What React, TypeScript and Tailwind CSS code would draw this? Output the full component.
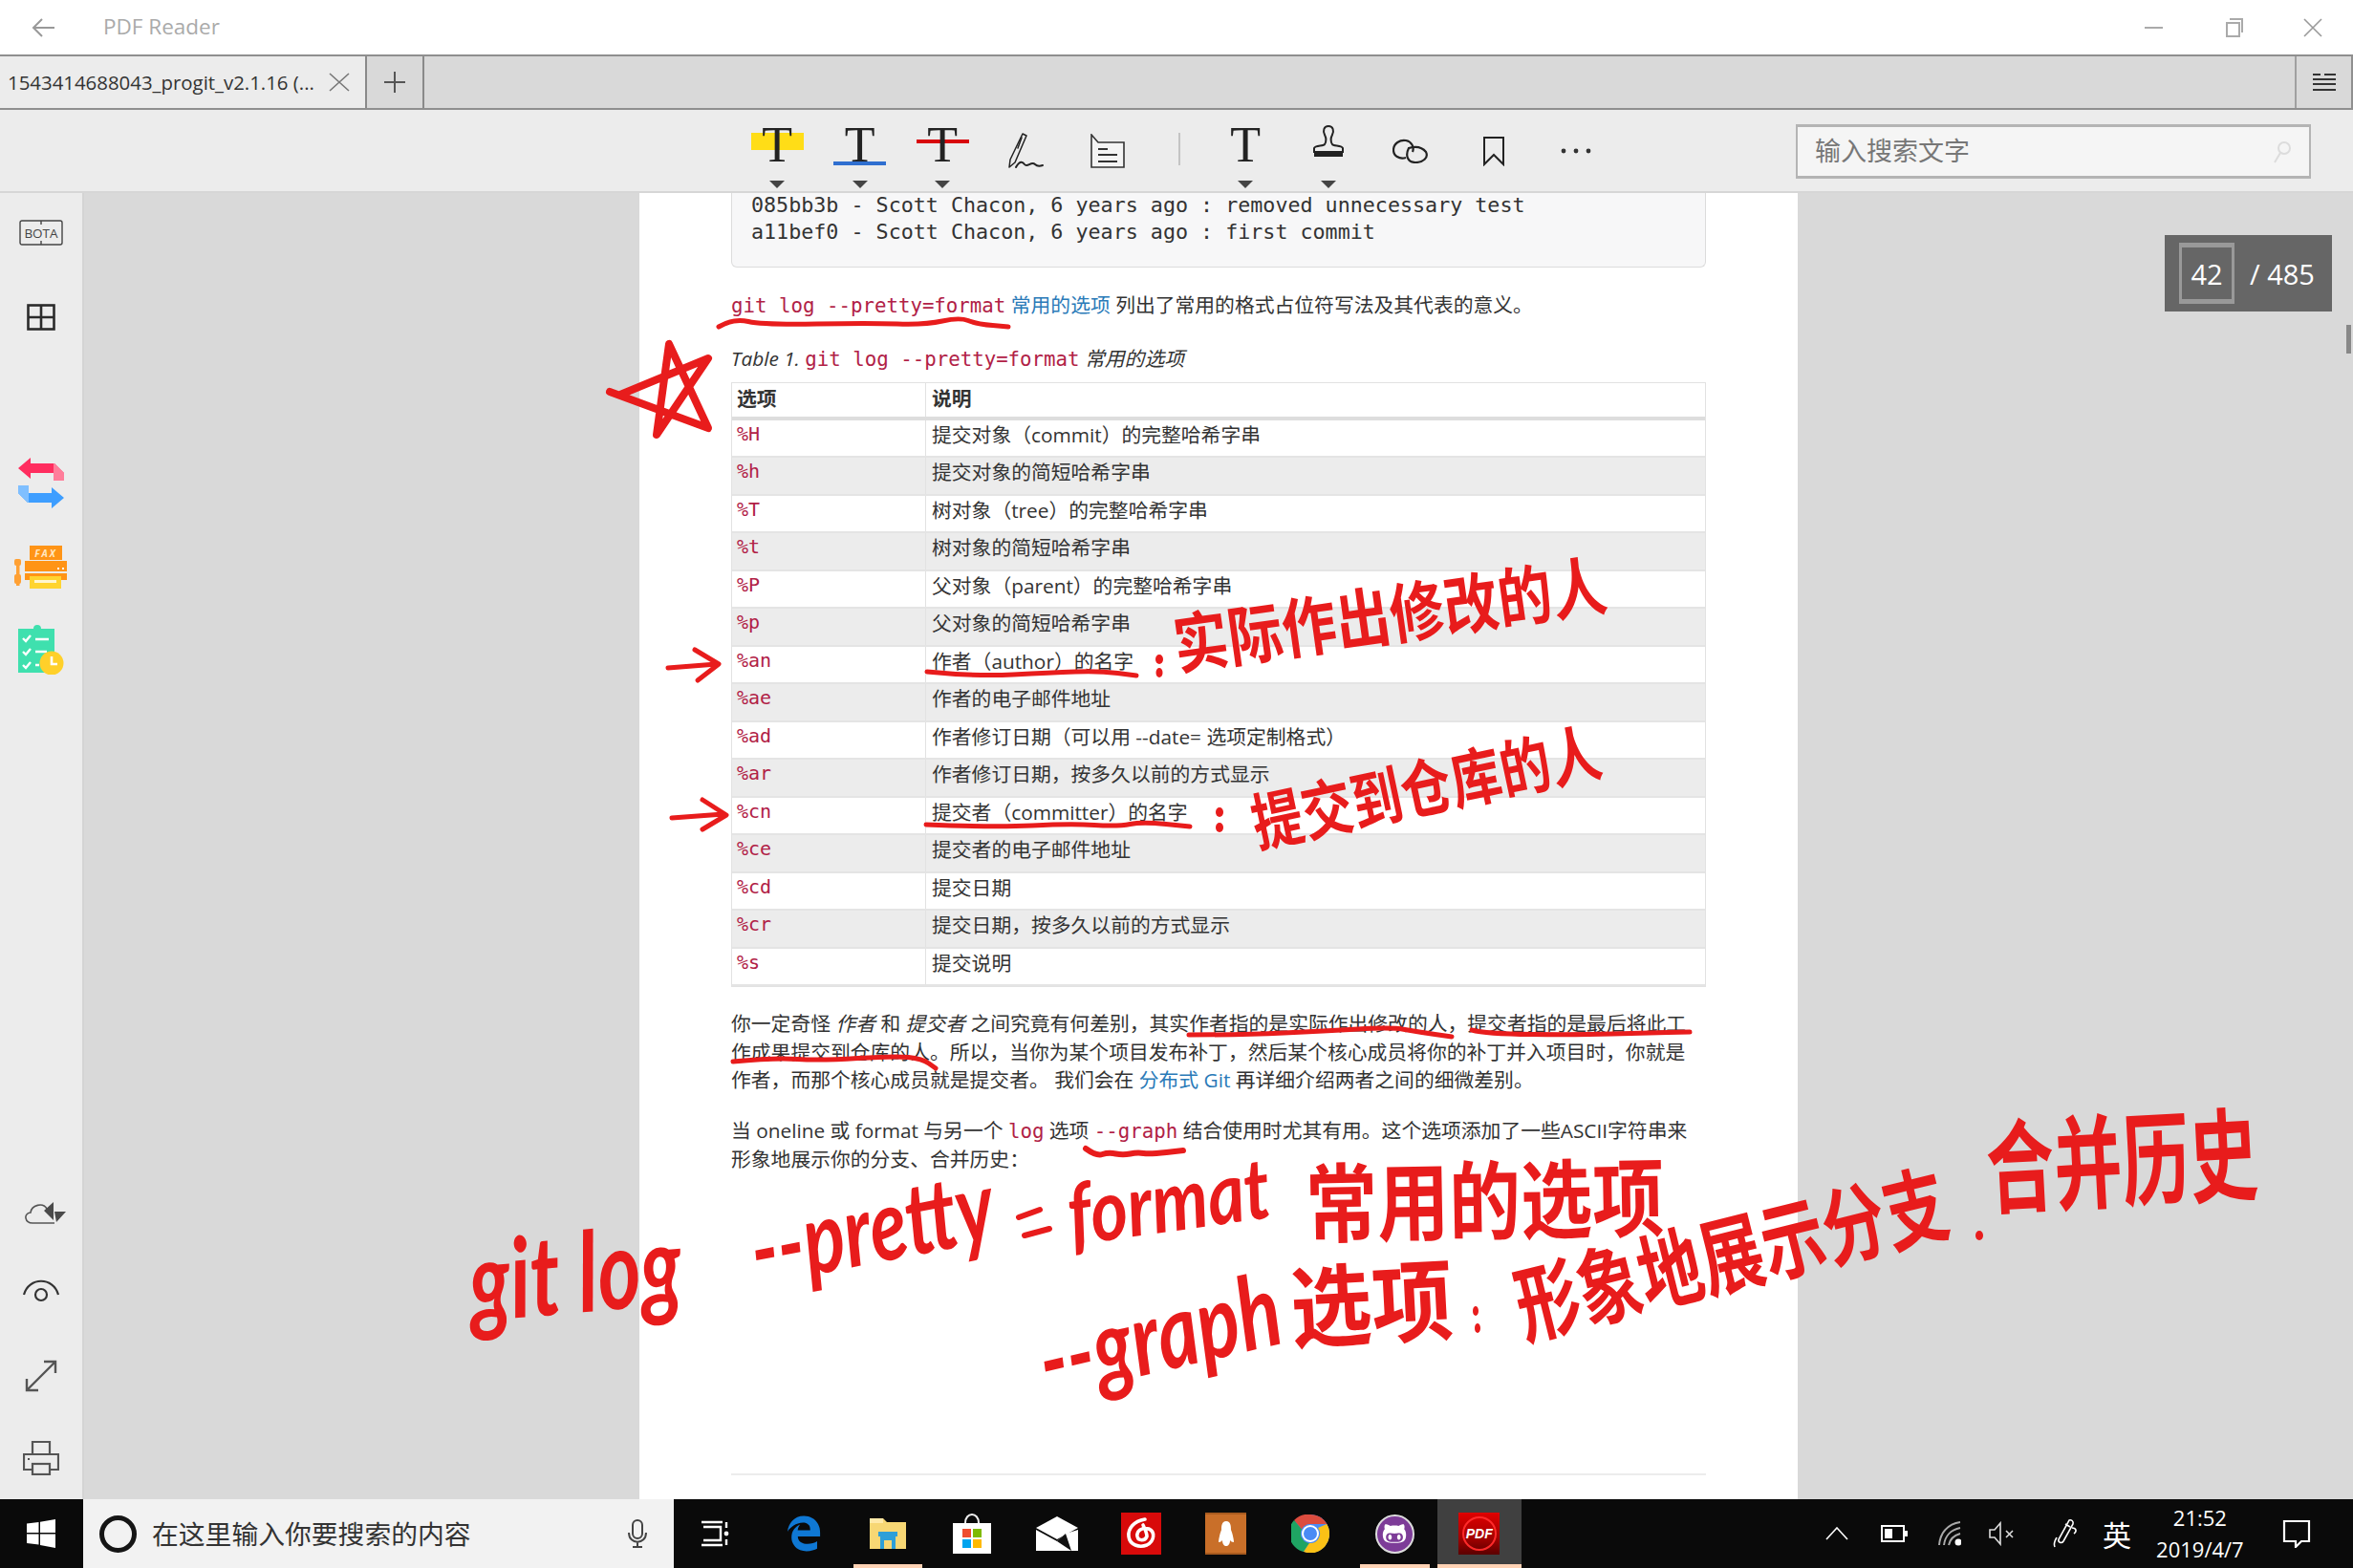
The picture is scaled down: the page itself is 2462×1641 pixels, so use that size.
import React from "react";
import { FaEdgeLegacy, FaGithubAlt } from "react-icons/fa6";

const rows: [string, string][] = [
  ["%H", "提交对象（commit）的完整哈希字串"],
  ["%h", "提交对象的简短哈希字串"],
  ["%T", "树对象（tree）的完整哈希字串"],
  ["%t", "树对象的简短哈希字串"],
  ["%P", "父对象（parent）的完整哈希字串"],
  ["%p", "父对象的简短哈希字串"],
  ["%an", "作者（author）的名字"],
  ["%ae", "作者的电子邮件地址"],
  ["%ad", "作者修订日期（可以用 --date= 选项定制格式）"],
  ["%ar", "作者修订日期，按多久以前的方式显示"],
  ["%cn", "提交者（committer）的名字"],
  ["%ce", "提交者的电子邮件地址"],
  ["%cd", "提交日期"],
  ["%cr", "提交日期，按多久以前的方式显示"],
  ["%s", "提交说明"],
];

function smooth(p: number[][]): string {
  let d = `M${p[0][0]} ${p[0][1]}`;
  for (let i = 1; i < p.length - 1; i++) {
    const mx = (p[i][0] + p[i + 1][0]) / 2;
    const my = (p[i][1] + p[i + 1][1]) / 2;
    d += ` Q${p[i][0]} ${p[i][1]} ${mx} ${my}`;
  }
  const l = p[p.length - 1];
  return d + ` L${l[0]} ${l[1]}`;
}

const strokes: { w: number; p: number[][] }[] = [
  { w: 5, p: [[752, 342], [767, 333], [799, 340], [910, 338], [968, 340], [1004, 332], [1022, 339], [1055, 342]] },
  { w: 5, p: [[970, 703], [1020, 708], [1100, 704], [1150, 702], [1189, 707]] },
  { w: 5, p: [[969, 863], [1040, 866], [1120, 862], [1170, 865], [1195, 860], [1245, 865]] },
  { w: 5, p: [[1244, 1083], [1301, 1083], [1386, 1079], [1456, 1075], [1484, 1080], [1519, 1085]] },
  { w: 5, p: [[1540, 1078], [1554, 1082], [1652, 1083], [1722, 1081], [1768, 1080]] },
  { w: 5, p: [[767, 1111], [810, 1107], [859, 1110], [936, 1105], [965, 1108], [979, 1118]] },
  { w: 6, p: [[1136, 1202], [1147, 1210], [1160, 1206], [1175, 1209], [1190, 1206], [1203, 1208], [1238, 1204]] },
];

function Ink() {
  return (
    <svg className="absolute inset-0 pointer-events-none" width="2462" height="1641" viewBox="0 0 2462 1641" fill="none" stroke="#e81c1c" strokeLinecap="round" strokeLinejoin="round">
      {strokes.map((s, i) => (
        <path key={i} d={smooth(s.p)} strokeWidth={s.w} />
      ))}
      <path d="M638 410 L741 448 L700 360 L687 455 L741 375 L649 413" strokeWidth="8" />
      <path d="M699 699 L750 695 M727 680 L752 695 L730 712" strokeWidth="5" />
      <path d="M703 856 L757 852 M735 837 L760 853 L735 868" strokeWidth="5" />
      <g fill="#e81c1c" stroke="none">
        <ellipse cx="1213" cy="690" rx="4" ry="5" />
        <ellipse cx="1213" cy="704" rx="3.5" ry="5" />
        <ellipse cx="1276" cy="850" rx="4" ry="5" />
        <ellipse cx="1276" cy="866" rx="4" ry="5" />
        <ellipse cx="1544" cy="1372" rx="3" ry="5" />
        <ellipse cx="1546" cy="1390" rx="3" ry="5" />
        <ellipse cx="2071" cy="1293" rx="4" ry="5" />
      </g>
      <path d="M1066 1274 L1088 1266 M1072 1293 L1098 1286" strokeWidth="6" />
    </svg>
  );
}

const cjkInk = "absolute leading-none whitespace-nowrap origin-left text-[#e81c1c] font-bold font-['Noto_Sans_CJK_SC',sans-serif]";
const latInk = "absolute leading-none whitespace-nowrap origin-left text-[#e81c1c] italic font-bold font-['Lato',sans-serif]";

function Handwriting() {
  return (
    <div className="absolute inset-0 pointer-events-none">
      <span className={`${cjkInk} left-[1228px] top-[643px] text-[57px] -rotate-[8deg] scale-y-[1.2]`}>实际作出修改的人</span>
      <span className={`${cjkInk} left-[1310px] top-[833px] text-[53px] -rotate-[12deg] scale-y-[1.25]`}>提交到仓库的人</span>
      <span className={`${latInk} left-[490px] top-[1296px] text-[86px] -rotate-[5deg] scale-y-[1.35]`}>git log</span>
      <span className={`${latInk} left-[785px] top-[1266px] text-[80px] -rotate-[11deg] scale-y-[1.3]`}>--pretty</span>
      <span className={`${latInk} left-[1117px] top-[1233px] text-[74px] -rotate-[8deg] scale-y-[1.2]`}>format</span>
      <span className={`${cjkInk} left-[1366px] top-[1217px] text-[75px] -rotate-[1deg] scale-y-[1.2]`}>常用的选项</span>
      <span className={`${latInk} left-[1087px] top-[1381px] text-[82px] -rotate-[13deg] scale-y-[1.3]`}>--graph</span>
      <span className={`${cjkInk} left-[1350px] top-[1320px] text-[85px] -rotate-[3deg] scale-y-[1.1]`}>选项</span>
      <span className={`${cjkInk} left-[1586px] top-[1330px] text-[66px] -rotate-[14deg] scale-y-[1.35]`}>形象地展示分支</span>
      <span className={`${cjkInk} left-[2078px] top-[1181px] text-[71px] -rotate-[3deg] scale-y-[1.5]`}>合并历史</span>
    </div>
  );
}

function Caret() {
  return (
    <svg width="16" height="8" viewBox="0 0 16 8" className="mt-[3px]">
      <polygon points="0,0 16,0 8,8" fill="#444" />
    </svg>
  );
}

function Tool({ children, caret }: { children: React.ReactNode; caret?: boolean }) {
  return (
    <div className="w-[86.5px] h-full flex flex-col items-center">
      <div className="h-[71px] flex items-center justify-center">{children}</div>
      {caret && <Caret />}
    </div>
  );
}

function TIcon({ bar }: { bar?: React.ReactNode }) {
  return (
    <div className="relative w-[55px] h-[71px] flex items-center justify-center">
      {bar}
      <span className="relative text-[52px] leading-none text-[#222] font-['Liberation_Serif',serif] mt-[2px]">T</span>
    </div>
  );
}

function Toolbar() {
  return (
    <div className="h-[87px] shrink-0 bg-[#ececec] border-b-2 border-[#d6d6d6] flex pl-[770px] relative">
      <Tool caret><TIcon bar={<div className="absolute left-0 right-0 top-[24px] h-[18px] bg-[#ffdd17]" />} /></Tool>
      <Tool caret><TIcon bar={<div className="absolute left-0 right-0 top-[54px] h-[4px] bg-[#2f6fd0]" />} /></Tool>
      <Tool caret><TIcon bar={<div className="absolute left-0 right-0 top-[31px] h-[4px] bg-[#d8060c]" />} /></Tool>
      <Tool>
        <svg width="38" height="38" viewBox="0 0 38 38" fill="none" stroke="#222" strokeWidth="1.5" strokeLinejoin="round" strokeLinecap="round" className="mt-[15px]">
          <path d="M16 1 L20 3 L8 31 L2 36 L3 28 Z" />
          <path d="M15 5 L11 16" />
          <path d="M9 36 C13 29 16 30 18 33 C21 37 25 29 29 33 C31 35 34 35 37 34" strokeWidth="2" />
        </svg>
      </Tool>
      <Tool>
        <svg width="36" height="36" viewBox="0 0 36 36" fill="none" stroke="#333" strokeWidth="1.6" className="mt-[15px]">
          <path d="M1 35 V1 L8 9 H35 V35 Z" fill="#f4f4f4" />
          <path d="M8 16 H18 M8 22 H28 M8 29 H28" strokeWidth="2" />
        </svg>
      </Tool>
      <div className="w-[57.5px] h-full flex items-start justify-center pl-[6px] pt-[24px]">
        <div className="w-[2px] h-[34px] bg-[#c4c4c4]" />
      </div>
      <Tool caret><TIcon /></Tool>
      <Tool caret>
        <svg width="34" height="36" viewBox="0 0 34 36" fill="none" stroke="#222" strokeWidth="2" className="-mt-[3px]">
          <path d="M17 1 C12 1 11 6 13 10 C15 14 15 17 13 20 C12 22 3 21 2 24 V28 H32 V24 C31 21 22 22 21 20 C19 17 19 14 21 10 C23 6 22 1 17 1 Z" />
          <path d="M2 31 H32" strokeWidth="4" />
        </svg>
      </Tool>
      <Tool>
        <svg width="38" height="26" viewBox="0 0 38 26" fill="none" stroke="#222" strokeWidth="2.2" className="mt-[15px]">
          <path d="M14 20 C7 22 1 18 1 12 C1 5 8 1 14 2 C20 3 23 9 21 14" />
          <path d="M17 10 C24 8 31 9 35 14 C38 20 32 25 24 25 C16 25 13 18 17 10 Z" />
        </svg>
      </Tool>
      <Tool>
        <svg width="24" height="32" viewBox="0 0 24 32" fill="none" stroke="#222" strokeWidth="2" className="mt-[15px]">
          <path d="M2 2 H22 V30 L12 20 L2 30 Z" />
        </svg>
      </Tool>
      <Tool>
        <svg width="34" height="8" viewBox="0 0 34 8" fill="#333" className="mt-[14px]">
          <circle cx="4" cy="4" r="2.4" /><circle cx="17" cy="4" r="2.4" /><circle cx="30" cy="4" r="2.4" />
        </svg>
      </Tool>
      <div className="ml-auto mr-[44px] mt-[15px] w-[539px] h-[57px] bg-[#f5f5f5] border-2 border-t-[3px] border-b-[3px] border-[#b4b4b4] flex items-center justify-between pl-[18px] pr-[18px]">
        <span className="text-[27px] leading-none -mt-[5px] text-[#777] font-['Noto_Sans_CJK_SC',sans-serif]">输入搜索文字</span>
        <svg width="20" height="24" viewBox="0 0 20 24" fill="none" stroke="#dcdcdc" strokeWidth="2">
          <circle cx="12" cy="8" r="6" />
          <path d="M8 13 L2 23" />
        </svg>
      </div>
    </div>
  );
}

function Sidebar() {
  return (
    <div className="w-[88px] shrink-0 bg-[#ececec] border-r-2 border-[#d4d4d4] flex flex-col items-center justify-between pt-[28px] pb-[25px]">
      <div className="flex flex-col items-center">
        <svg width="46" height="27" viewBox="0 0 46 27" fill="none" stroke="#444" strokeWidth="1.4">
          <rect x="1" y="1" width="44" height="25" rx="2" />
          <path d="M23 1 V5 M23 22 V26" />
          <text x="23" y="18.5" textAnchor="middle" fontSize="13.5" fill="#444" stroke="none" fontFamily="Open Sans, sans-serif">BOTA</text>
        </svg>
        <svg width="30" height="28" viewBox="0 0 30 28" fill="none" stroke="#2b2b2b" strokeWidth="2.6" className="mt-[61px]">
          <rect x="1.5" y="1.5" width="27" height="25" />
          <path d="M15 1 V27 M1 14 H29" />
        </svg>
        <svg width="48" height="53" viewBox="0 0 48 53" className="mt-[133px]">
          <path d="M0 11 L13 0 V6 H38 L48 16 V24 H37 V16 H13 V22 Z" fill="#ff2d5f" />
          <path d="M37 6 H38 L48 16 V24 H37 Z" fill="#ff7d9a" />
          <path d="M48 42 L35 53 V47 H10 L0 37 V29 H11 V37 H35 V31 Z" fill="#3e9eff" />
          <path d="M0 29 H11 V47 H10 L0 37 Z" fill="#7fbfff" />
        </svg>
        <svg width="56" height="46" viewBox="0 0 56 46" className="mt-[39px]">
          <rect x="0" y="14" width="7" height="7" rx="2" fill="#ffa033" />
          <rect x="2" y="16" width="3.5" height="26" fill="#ffa033" />
          <rect x="0" y="30" width="7" height="10" rx="2" fill="#ffa033" />
          <rect x="16" y="0" width="34" height="15" fill="#ff9416" />
          <text x="33" y="11.5" textAnchor="middle" fontSize="10" fontWeight="700" fontStyle="italic" letterSpacing="2" fill="#ffe8c2" fontFamily="Open Sans, sans-serif">FAX</text>
          <rect x="11" y="16" width="44" height="11" fill="#ff9416" />
          <rect x="45" y="23" width="2" height="2" fill="#fff" /><rect x="50" y="23" width="2" height="2" fill="#fff" />
          <rect x="11" y="29" width="44" height="7" fill="#ff9416" />
          <rect x="16" y="32" width="33" height="13" fill="#ffd430" />
          <rect x="21" y="36" width="23" height="3" fill="#fff6cf" />
        </svg>
        <svg width="48" height="54" viewBox="0 0 48 54" className="mt-[35px]">
          <path d="M0 6 H16 A4 4 0 0 1 24 6 H38 V52 H0 Z" fill="#3fe0ae" />
          <g fill="none" stroke="#fff" strokeWidth="2.4">
            <path d="M5 16 L8 19 L13 13 M5 30 L8 33 L13 27 M5 44 L8 47 L13 41" />
            <path d="M18 17 H32 M18 30 H30 M18 44 H22" />
          </g>
          <circle cx="35" cy="42" r="12.5" fill="#ffd02a" />
          <path d="M35 35 V43 H41" fill="none" stroke="#fff" strokeWidth="2.6" />
        </svg>
      </div>
      <div className="flex flex-col items-center">
        <svg width="44" height="24" viewBox="0 0 44 24" fill="none" stroke="#555" strokeWidth="1.6" className="ml-[8px]">
          <path d="M9 23 H32 M9 23 C1 23 -1 13 7 12 C8 4 20 1 24 8" />
          <path d="M21 10 L31 1 V20 Z M32 11 H44 L34 22 Z" fill="#4a4a4a" stroke="none" />
        </svg>
        <svg width="38" height="24" viewBox="0 0 38 24" fill="none" stroke="#333" strokeWidth="2.2" className="mt-[58px]">
          <path d="M1 16 C6 -3 32 -3 37 16" />
          <circle cx="19" cy="16" r="6" />
        </svg>
        <svg width="34" height="34" viewBox="0 0 34 34" fill="none" stroke="#555" strokeWidth="2.4" className="mt-[60px]">
          <path d="M2 32 L32 2 M20 2 H32 V14 M2 20 V32 H14" />
        </svg>
        <svg width="38" height="36" viewBox="0 0 38 36" fill="none" stroke="#555" strokeWidth="2.2" className="mt-[51px]">
          <path d="M10 14 V1 H28 V14" />
          <path d="M10 30 H1 V14 H37 V30 H28" />
          <rect x="10" y="24" width="18" height="11" />
          <rect x="5" y="18" width="2" height="2" fill="#555" stroke="none" />
        </svg>
      </div>
    </div>
  );
}

const mono = "font-['DejaVu_Sans_Mono',monospace]";
const kw = `text-[#b12146] text-[20.75px] ${mono}`;
const link = "text-[#2a7ab8]";

function Page() {
  return (
    <div className="w-[1212px] h-full bg-white overflow-hidden pl-[96px] text-[20.8px] text-[#333] font-['Open_Sans','Noto_Sans_CJK_SC',sans-serif]">
      <div className={`w-[1020px] h-[79px] -mt-px bg-[#f7f7f8] border border-t-0 border-[#dcdcdc] rounded-b-[6px] pl-[20px] text-[21.7px] leading-[28px] whitespace-pre text-[#333] ${mono}`}>
        <div>085bb3b - Scott Chacon, 6 years ago : removed unnecessary test</div>
        <div>a11bef0 - Scott Chacon, 6 years ago : first commit</div>
      </div>
      <p className="mt-[24px] leading-[30px] whitespace-nowrap">
        <span className={kw}>git log --pretty=format</span> <span className={link}>常用的选项</span> 列出了常用的格式占位符写法及其代表的意义。
      </p>
      <p className="mt-[25px] leading-[30px] whitespace-nowrap">
        <i>Table 1.</i> <span className={kw}>git log --pretty=format</span> <i>常用的选项</i>
      </p>
      <div className="mt-[9px] w-[1020px] border border-[#e2e2e2]">
        <div className="h-[39px] flex items-center border-b-[4px] border-[#dddddd] font-bold">
          <div className="w-[203px] pl-[5px] pb-[2px] border-r border-[#e2e2e2] h-full flex items-center">选项</div>
          <div className="pl-[6px] pb-[2px]">说明</div>
        </div>
        {rows.map(([c, d], i) => (
          <div key={c} className={`h-[39.47px] flex border-b-2 border-[#e4e4e4] ${i % 2 === 1 ? "bg-[#ececec]" : "bg-white"}`}>
            <div className={`w-[203px] pl-[5px] border-r border-[#e2e2e2] pt-[1px] text-[#b12146] text-[20px] leading-[26px] ${mono}`}>{c}</div>
            <div className="pl-[6px] leading-[31px]">{d}</div>
          </div>
        ))}
      </div>
      <p className="mt-[24px] leading-[29.6px] whitespace-nowrap">
        你一定奇怪 <i>作者</i> 和 <i>提交者</i> 之间究竟有何差别，其实作者指的是实际作出修改的人，提交者指的是最后将此工<br />
        作成果提交到仓库的人。所以，当你为某个项目发布补丁，然后某个核心成员将你的补丁并入项目时，你就是<br />
        作者，而那个核心成员就是提交者。 我们会在 <span className={link}>分布式 Git</span> 再详细介绍两者之间的细微差别。
      </p>
      <p className="mt-[23px] leading-[29.6px] whitespace-nowrap">
        当 oneline 或 format 与另一个 <span className={kw}>log</span> 选项 <span className={kw}>--graph</span> 结合使用时尤其有用。这个选项添加了一些ASCII字符串来<br />
        形象地展示你的分支、合并历史：
      </p>
      <div className="mt-[313px] w-[1020px] h-[2px] bg-[#ececec]" />
    </div>
  );
}

function TaskIcon({ children, active, underline }: { children: React.ReactNode; active?: boolean; underline?: boolean }) {
  return (
    <div className={`w-[88.4px] h-full flex items-center justify-center relative ${active ? "bg-[#404040]" : ""}`}>
      {children}
      {underline && <div className={`absolute bottom-0 h-[4px] bg-[#ffd2b4] ${active ? "left-0 right-0" : "left-[8px] right-[8px]"}`} />}
    </div>
  );
}

function Taskbar() {
  return (
    <div className="h-[72px] shrink-0 bg-[#0a0a0a] flex items-stretch">
      <div className="w-[87px] flex items-center justify-center pr-[1px]">
        <svg width="30" height="30" viewBox="0 0 30 30" fill="#fff">
          <path d="M0 4.5 L12.5 3 V14 H0 Z M14 2.8 L30 0 V14 H14 Z M0 15.5 H12.5 V26.5 L0 25 Z M14 15.5 H30 V30 L14 27 Z" />
        </svg>
      </div>
      <div className="w-[618px] bg-[#f2f2f2] flex items-center pl-[17px]">
        <div className="w-[39px] h-[39px] rounded-full border-[5px] border-[#151515]" />
        <span className="ml-[16px] text-[27.8px] leading-none text-[#333] font-['Noto_Sans_CJK_SC',sans-serif]">在这里输入你要搜索的内容</span>
        <svg width="20" height="30" viewBox="0 0 20 30" fill="none" stroke="#444" strokeWidth="2" className="ml-[164px]">
          <rect x="5" y="1" width="10" height="19" rx="5" />
          <path d="M1 14 C1 27 19 27 19 14 M10 24 V29 M5 29 H15" />
        </svg>
      </div>
      <div className="flex items-stretch">
        <div className="mr-[3px] flex">
          <TaskIcon>
            <svg width="30" height="28" viewBox="0 0 30 28" fill="none" stroke="#fff" strokeWidth="2.4">
              <path d="M0 2 H22 M0 26 H22 M2 7 H20 V21 H2 M26 2 V8 M26 20 V26" />
              <circle cx="26" cy="14" r="2.4" fill="#fff" stroke="none" />
            </svg>
          </TaskIcon>
        </div>
        <TaskIcon>
          <FaEdgeLegacy className="text-[38px] text-[#0f78d4]" />
        </TaskIcon>
        <TaskIcon underline>
          <svg width="38" height="34" viewBox="0 0 38 34">
            <path d="M0 1 H14 L18 5 H38 V33 H0 Z" fill="#f7d774" />
            <rect x="0" y="1" width="14" height="5" fill="#ffe9a8" />
            <path d="M11 33 V20 H27 V33 H23 V24 H15 V33 Z" fill="#2d9fd8" />
            <rect x="9" y="15" width="20" height="5" fill="#2d9fd8" />
          </svg>
        </TaskIcon>
        <TaskIcon>
          <svg width="42" height="42" viewBox="0 0 42 42">
            <path d="M14 10 C14 -2 28 -2 28 10" fill="none" stroke="#eee" strokeWidth="2" />
            <rect x="1" y="10" width="40" height="32" fill="#fff" />
            <rect x="11" y="16" width="9" height="9" fill="#ef4d2f" /><rect x="22" y="16" width="9" height="9" fill="#7fba00" />
            <rect x="11" y="27" width="9" height="9" fill="#00a4ef" /><rect x="22" y="27" width="9" height="9" fill="#ffb900" />
          </svg>
        </TaskIcon>
        <TaskIcon>
          <svg width="44" height="36" viewBox="0 0 44 36">
            <path d="M0 12 L22 0 L44 12 L22 24 Z" fill="#fff" />
            <path d="M0 14 L22 26 L31 18 L44 14 V36 H0 Z" fill="#fff" />
            <path d="M22 26 L31 18 L37 36 Z" fill="#111" />
          </svg>
        </TaskIcon>
        <TaskIcon>
          <div className="w-[42px] h-[44px] bg-[#d80a0a] flex items-center justify-center">
            <svg width="32" height="36" viewBox="0 0 32 36" fill="none" stroke="#fff" strokeWidth="3.6" strokeLinecap="round">
              <path d="M20 3 C8 5 2 13 3 21 C4 30 14 33 22 30 C30 26 31 16 24 13 C17 11 11 15 12 21 C13 26 20 26 22 21 C22 17 20 13 18 9" />
            </svg>
          </div>
        </TaskIcon>
        <TaskIcon>
          <div className="w-[43px] h-[44px] bg-[#c96f29] border-b-2 border-t-2 border-[#a85b1f] flex items-center justify-center">
            <svg width="16" height="26" viewBox="0 0 16 26" fill="#fff">
              <path d="M8 0 C3 0 3 6 3 9 C1 14 0 20 0 22 C2 22 3 21 4 20 C4 24 6 26 8 26 C10 26 12 24 12 20 C13 21 14 22 16 22 C16 20 15 14 13 9 C13 6 13 0 8 0 Z" />
            </svg>
          </div>
        </TaskIcon>
        <TaskIcon>
          <svg width="40" height="40" viewBox="0 0 40 40">
            <circle cx="20" cy="20" r="20" fill="#4a8bf5" />
            <path d="M20 0 A20 20 0 0 1 37.3 10 H20 A10 10 0 0 0 11 15.5 L3 6 A20 20 0 0 1 20 0 Z" fill="#dc4c3e" />
            <path d="M3 6 L11 15.5 A10 10 0 0 0 19 30 L13 39 A20 20 0 0 1 3 6 Z" fill="#1fa463" />
            <path d="M37.3 10 A20 20 0 0 1 13 39 L19 30 A10 10 0 0 0 28 14 Z" fill="#fbc116" />
            <circle cx="20" cy="20" r="9" fill="#fff" />
            <circle cx="20" cy="20" r="7" fill="#4a8bf5" />
          </svg>
        </TaskIcon>
        <TaskIcon underline>
          <div className="w-[41px] h-[41px] rounded-full bg-[#7d3c98] border-2 border-[#ddd] flex items-center justify-center">
            <FaGithubAlt className="text-[26px] text-white" />
          </div>
        </TaskIcon>
        <TaskIcon active underline>
          <div className="w-[43px] h-[44px] bg-[linear-gradient(180deg,#e00000,#a40000_60%,#5a0000)] flex items-center justify-center">
            <div className="w-[36px] h-[36px] rounded-full border-2 border-[#ff2a2a] flex items-center justify-center text-[14px] leading-none font-bold italic text-white font-['Liberation_Sans',sans-serif]">PDF</div>
          </div>
        </TaskIcon>
      </div>
      <div className="ml-[318px] flex items-center text-white">
        <svg width="24" height="14" viewBox="0 0 24 14" fill="none" stroke="#fff" strokeWidth="1.6"><path d="M1 13 L12 1 L23 13" /></svg>
        <svg width="28" height="18" viewBox="0 0 28 18" className="ml-[34px]" fill="none" stroke="#fff" strokeWidth="2">
          <rect x="1" y="1" width="23" height="16" />
          <rect x="4" y="4" width="8" height="10" fill="#fff" stroke="none" />
          <rect x="25" y="6" width="3" height="6" fill="#fff" stroke="none" />
        </svg>
        <svg width="24" height="26" viewBox="0 0 24 26" className="ml-[32px]" fill="none" stroke="#aaa" strokeWidth="2">
          <path d="M1 25 C2 12 10 3 23 1 M6 25 C7 16 13 9 23 7 M11 25 C12 20 16 15 23 13" />
          <circle cx="21" cy="22" r="3.5" fill="#fff" stroke="none" />
        </svg>
        <svg width="26" height="26" viewBox="0 0 26 26" className="ml-[29px]" fill="none" stroke="#ddd" strokeWidth="1.6">
          <path d="M1 9 H6 L12 2 V24 L6 17 H1 Z" />
          <path d="M18 10 L25 17 M25 10 L18 17" />
        </svg>
        <svg width="28" height="32" viewBox="0 0 28 32" className="ml-[40px]" fill="none" stroke="#fff" strokeWidth="1.6">
          <path d="M18 2 C20 1 23 3 22 6 L12 24 C10 27 6 25 7 22 Z M14 6 L19 9" />
          <path d="M3 30 C1 26 4 22 5 20 M21 10 C26 10 26 14 23 16" />
        </svg>
        <span className="ml-[25px] text-[30px] leading-none font-['Noto_Sans_CJK_SC',sans-serif]">英</span>
        <div className="ml-[20px] w-[104px] flex flex-col items-center text-[22px] leading-[33px] font-['Open_Sans',sans-serif]">
          <span>21:52</span>
          <span>2019/4/7</span>
        </div>
        <svg width="30" height="30" viewBox="0 0 30 30" className="ml-[34px]" fill="none" stroke="#fff" strokeWidth="2.2">
          <path d="M2 2 H28 V23 H20 L14 29 V23 H2 Z" />
        </svg>
      </div>
    </div>
  );
}

export default function App() {
  return (
    <div className="relative w-[2462px] h-[1641px] overflow-hidden flex flex-col bg-white font-['Open_Sans','Noto_Sans_CJK_SC',sans-serif]">
      <div className="h-[57px] shrink-0 bg-white flex items-center pl-[33px]">
        <svg width="24" height="20" viewBox="0 0 24 20" fill="none" stroke="#999" strokeWidth="2"><path d="M24 10 H2 M11 1 L2 10 L11 19" /></svg>
        <span className="ml-[51px] text-[22.5px] leading-none text-[#aaa]">PDF Reader</span>
        <div className="ml-auto mr-[32px] flex items-center">
          <div className="w-[19px] h-[2px] bg-[#aaa]" />
          <svg width="20" height="20" viewBox="0 0 20 20" fill="none" stroke="#aaa" strokeWidth="2" className="ml-[65px]">
            <path d="M5 1 H18 V15" /><rect x="2" y="5" width="13" height="14" />
          </svg>
          <svg width="20" height="20" viewBox="0 0 20 20" fill="none" stroke="#999" strokeWidth="1.6" className="ml-[62px]"><path d="M1 1 L19 19 M19 1 L1 19" /></svg>
        </div>
      </div>
      <div className="h-[58px] shrink-0 bg-[#d9d9d9] border-y-2 border-[#8f8f8f] border-r-2 flex">
        <div className="w-[384px] bg-[#ececec] border-r-2 border-[#8a8a8a] flex items-center pl-[8px]">
          <span className="text-[20.4px] leading-none text-[#333] whitespace-nowrap">1543414688043_progit_v2.1.16 (...</span>
          <svg width="22" height="20" viewBox="0 0 22 20" fill="none" stroke="#777" strokeWidth="1.6" className="ml-[15px]"><path d="M1 1 L21 19 M21 1 L1 19" /></svg>
        </div>
        <div className="w-[60px] border-r-2 border-[#8a8a8a] flex items-center justify-center">
          <svg width="22" height="22" viewBox="0 0 22 22" stroke="#555" strokeWidth="2"><path d="M11 0 V22 M0 11 H22" /></svg>
        </div>
        <div className="ml-auto w-[59px] border-l-2 border-[#a0a0a0] flex items-center justify-center">
          <svg width="24" height="20" viewBox="0 0 24 20" fill="none" stroke="#333" strokeWidth="2">
            <path d="M0 2 H8 M12 2 H24 M0 7 H24 M0 12 H24 M0 18 H24" />
          </svg>
        </div>
      </div>
      <Toolbar />
      <div className="flex-1 min-h-0 flex relative">
        <Sidebar />
        <div className="flex-1 h-full bg-[#d9d9d9] flex justify-center overflow-hidden">
          <Page />
        </div>
        <div className="absolute left-[2265px] top-[44px] w-[175px] h-[80px] bg-[#666] flex items-center pl-[15px] text-white text-[29px] leading-none">
          <div className="w-[58px] h-[64px] border-[3px] border-[#999] border-t-[5px] border-b-[5px] flex items-center justify-center">42</div>
          <span className="ml-[16px]">/ 485</span>
        </div>
        <div className="absolute left-[2455px] top-[138px] w-[5px] h-[30px] bg-[#888]" />
      </div>
      <Taskbar />
      <Ink />
      <Handwriting />
    </div>
  );
}
